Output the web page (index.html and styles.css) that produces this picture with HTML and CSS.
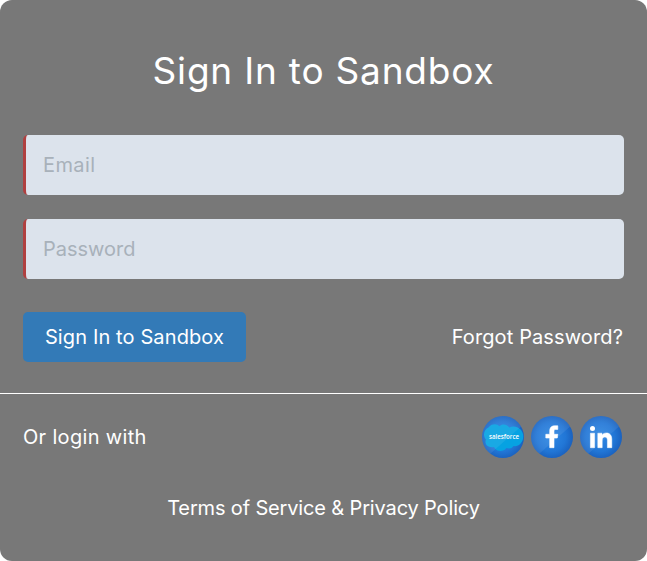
FILE: index.html
```html
<!DOCTYPE html>
<html lang="en">
<head>
<meta charset="utf-8">
<title>Sign In to Sandbox</title>
<link rel="stylesheet" href="styles.css">
</head>
<body>
<main class="card">
  <form class="signin">
    <h1 class="title">Sign In to Sandbox</h1>
    <input class="field email" type="email" placeholder="Email" aria-label="Email">
    <input class="field password" type="password" placeholder="Password" aria-label="Password">
    <div class="actions">
      <button class="submit" type="button">Sign In to Sandbox</button>
      <a class="forgot">Forgot Password?</a>
    </div>
  </form>
  <footer class="footer">
    <div class="social">
      <span class="or">Or login with</span>
      <div class="icons">
        <svg class="icon" viewBox="0 0 42 42" role="img" aria-label="Salesforce">
          <defs>
            <radialGradient id="ball" cx="48%" cy="50%" r="53%"><stop offset="0" stop-color="#2f88e4"/><stop offset=".65" stop-color="#2176d6"/><stop offset="1" stop-color="#1a60bd"/></radialGradient>
            <clipPath id="disc"><circle cx="21" cy="21" r="21"/></clipPath>
          </defs>
          <circle cx="21" cy="21" r="21" fill="url(#ball)"/>
          <path fill="#06a2e2" d="M17.500 10.300C20 7.500 25 8 27.300 11.500C34 8.500 41.300 13.500 41.300 20.500C41.300 27 36 31 31.500 30C30 32.500 27 33 24.500 32C22 36 14 36 12 31C6 32 2 28.500 4 23.500C0 19 2.500 13 6.500 11.500C9 7.500 15 7 17.500 10.300Z"/>
          <path clip-path="url(#disc)" fill="#fff" opacity=".08" d="M0 0H42V8L8 38L0 42Z"/>
          <text class="sf" x="22" y="23" text-anchor="middle" textLength="30" lengthAdjust="spacingAndGlyphs">salesforce</text>
        </svg>
        <svg class="icon" viewBox="0 0 42 42" role="img" aria-label="Facebook">
          <circle cx="21" cy="21" r="21" fill="url(#ball)"/>
          <path clip-path="url(#disc)" fill="#fff" opacity=".08" d="M0 0H42V8L8 38L0 42Z"/>
          <path fill="#fff" stroke="#fff" stroke-width=".6" stroke-linejoin="round" d="M18.700 31.700V22H14.800V18.300H18.700V15.200C18.700 11.500 20.500 9.800 24 9.800H26.800V13.400H24.700C23.300 13.400 23 14 23 15.400V18.300H26.800L26.300 22H23V31.700Z"/>
        </svg>
        <svg class="icon" viewBox="0 0 42 42" role="img" aria-label="LinkedIn">
          <circle cx="21" cy="21" r="21" fill="url(#ball)"/>
          <path clip-path="url(#disc)" fill="#fff" opacity=".08" d="M0 0H42V8L8 38L0 42Z"/>
          <circle cx="12.500" cy="12.500" r="2.500" fill="#fff"/>
          <path fill="#fff" stroke="#fff" stroke-width=".5" stroke-linejoin="round" d="M10.400 17.200H14.600V31.700H10.400ZM17.800 17.200H22V19.200C24 15.800 31.800 15.600 31.800 23V31.700H27.400V24C27.400 20 22.200 20 22.200 24V31.700H17.800Z"/>
        </svg>
      </div>
    </div>
    <p class="legal"><a>Terms of Service</a> &amp; <a>Privacy Policy</a></p>
  </footer>
</main>
</body>
</html>
```

FILE: styles.css
```css
* { box-sizing: border-box; }
body { margin: 0; background: #fff; font-family: Inter, sans-serif; font-size: 20px; color: #fff; }
.card { height: 561px; background: #787878; border-radius: 12px; overflow: hidden; }
.signin { height: 394px; padding: 43px 23px 0; border-bottom: 1px solid #fff; }
.title { margin: 0 0 36px; height: 56px; line-height: 56px; font-size: 37px; font-weight: 400; letter-spacing: .8px; text-align: center; }
.field { display: block; width: 100%; height: 60px; margin-bottom: 24px; padding: 0 17px; border: 0; border-left: 3px solid #b04040; border-radius: 5px; background: #dce3ec; font: inherit; outline: 0; }
.field::placeholder { color: #a8b1ba; opacity: 1; }
.email { letter-spacing: .4px; }
.actions { display: flex; justify-content: space-between; align-items: center; margin-top: 33px; }
.submit { width: 223px; height: 50px; padding: 0; border: 0; border-radius: 5px; background: #337ab7; color: #fff; font: inherit; letter-spacing: .12px; }
.forgot { margin-right: 1px; letter-spacing: .12px; }
.footer { padding: 22px 23px 0; }
.social { display: flex; justify-content: space-between; align-items: center; height: 42px; }
.or { letter-spacing: .33px; }
.icons { display: flex; gap: 7px; margin-right: 2px; }
.icon { width: 42px; height: 42px; display: block; }
.sf { font: 600 7px "Open Sans", sans-serif; fill: #fff; }
.legal { margin: 36px 0 0; line-height: 28px; letter-spacing: -.15px; text-align: center; }
```
